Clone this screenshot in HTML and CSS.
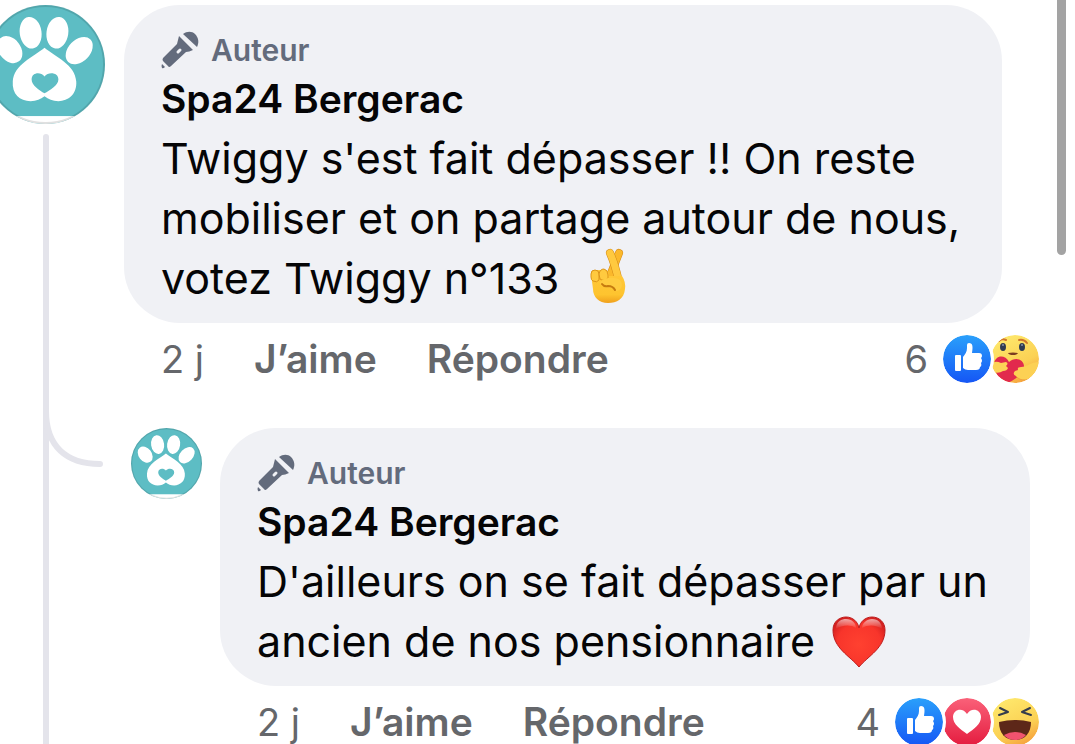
FILE: index.html
```html
<!doctype html>
<html lang="fr">
<head>
    <meta charset="UTF-8">
    <meta name="viewport" content="width=device-width, initial-scale=1.0">
    <title>Commentaires - Spa24 Bergerac</title>
    <link rel="stylesheet" href="styles.css">
</head>
<body>
    <!-- Shared icons -->
    <svg class="sprite" aria-hidden="true">
        <defs>
            <linearGradient id="blue" x1="0" y1="0" x2="0" y2="1">
                <stop offset="0" stop-color="#2aa0fb"/>
                <stop offset="1" stop-color="#1556f5"/>
            </linearGradient>
            <linearGradient id="red" x1="0" y1="0" x2="0" y2="1">
                <stop offset="0" stop-color="#fa6179"/>
                <stop offset="1" stop-color="#e41c3f"/>
            </linearGradient>
            <linearGradient id="yellow" x1="0.3" y1="0" x2="0.8" y2="1">
                <stop offset="0" stop-color="#fee86c"/>
                <stop offset="0.6" stop-color="#fbd154"/>
                <stop offset="1" stop-color="#f59a3a"/>
            </linearGradient>
            <linearGradient id="skin" x1="0" y1="0" x2="0" y2="1">
                <stop offset="0" stop-color="#ffc83a"/>
                <stop offset="0.75" stop-color="#fec42f"/>
                <stop offset="1" stop-color="#f0a01c"/>
            </linearGradient>
            <radialGradient id="heartFill" cx="0.5" cy="0.55" r="0.6">
                <stop offset="0" stop-color="#ff4130"/>
                <stop offset="0.7" stop-color="#f8352b"/>
                <stop offset="1" stop-color="#d3201f"/>
            </radialGradient>
            <linearGradient id="shine" x1="0" y1="0" x2="0" y2="1">
                <stop offset="0" stop-color="#fff" stop-opacity="0.6"/>
                <stop offset="1" stop-color="#fff" stop-opacity="0"/>
            </linearGradient>
            <clipPath id="round"><circle cx="60" cy="60" r="60"/></clipPath>
            <clipPath id="face"><circle cx="24" cy="24" r="24"/></clipPath>
        </defs>

        <symbol id="paw" viewBox="0 0 120 120">
            <g clip-path="url(#round)">
                <rect width="120" height="120" fill="#5dbdc4"/>
                <rect y="112" width="120" height="8" fill="#fff"/>
                <g fill="#fff">
                    <ellipse cx="24" cy="45" rx="11" ry="15" transform="rotate(-38 24 45)"/>
                    <ellipse cx="45" cy="28" rx="11" ry="16" transform="rotate(-8 45 28)"/>
                    <ellipse cx="72" cy="28" rx="11" ry="16" transform="rotate(8 72 28)"/>
                    <ellipse cx="94" cy="46" rx="11" ry="16" transform="rotate(44 94 46)"/>
                    <path d="M59 43C70 52 90 60 91 77C92 90 83 97 73 97C67 97 63 95 59 92C55 95 51 97 45 97C34 97 26 90 27 77C28 60 48 52 59 43Z"/>
                </g>
                <path d="M59 89C54 86 46 81 46 75C46 68 55 67 59 72C63 67 73 68 73 75C73 81 64 86 59 89Z" fill="#5dbdc4"/>
            </g>
            <circle cx="60" cy="60" r="59" fill="none" stroke="#000" stroke-opacity="0.12" stroke-width="2"/>
        </symbol>

        <symbol id="mic" viewBox="0 0 38 38">
            <g fill="#636b7c">
                <path d="M22 3C26 0 31 0 34 3C38 7 38 12 36 16Z"/>
                <path d="M18 5L32 19Q28 21 25 21L10 35Q8 37 7 35L2 30Q1 29 2 27L16 13Q17 9 18 5Z"/>
                <path d="M1 33L4 36Q2 38 1 37Q0 35 1 33Z"/>
            </g>
            <path d="M17 21L19 19" stroke="#f0f1f5" stroke-width="3" stroke-linecap="round"/>
        </symbol>

        <symbol id="like" viewBox="0 0 48 48">
            <circle cx="24" cy="24" r="24" fill="url(#blue)"/>
            <g fill="#fff">
                <rect x="12" y="20" width="6" height="16" rx="1"/>
                <path d="M20 22C22 19 24 17 24 13V10Q24 8 26 8C30 8 30 12 29 18H36Q39 18 39 21Q39 22 38 23Q40 26 38 28Q39 31 37 32Q37 35 33 35H25Q22 35 20 33Z"/>
            </g>
        </symbol>

        <symbol id="love" viewBox="0 0 48 48">
            <circle cx="24" cy="24" r="24" fill="url(#red)"/>
            <path d="M24 36C17 31 10 26 10 19C10 11 20 9 24 16C28 9 38 11 38 19C38 26 31 31 24 36Z" fill="#fff"/>
        </symbol>

        <symbol id="haha" viewBox="0 0 48 48">
            <circle cx="24" cy="24" r="24" fill="url(#yellow)"/>
            <g fill="none" stroke="#343c4d" stroke-width="2" stroke-linecap="round" stroke-linejoin="round">
                <path d="M9 10L17 14L8 17"/>
                <path d="M39 10L31 14L40 17"/>
            </g>
            <path d="M8 24Q24 20 40 24C40 35 34 42 24 42C14 42 8 35 8 24Z" fill="#5d2719"/>
            <path d="M13 37Q24 31 35 37Q31 42 24 42Q17 42 13 37Z" fill="#f1536f"/>
        </symbol>

        <symbol id="care" viewBox="0 0 48 48">
            <g clip-path="url(#face)">
                <rect width="48" height="48" fill="url(#yellow)"/>
                <g fill="none" stroke="#cf762d" stroke-width="2" stroke-linecap="round">
                    <path d="M8 6Q11 3 15 5"/>
                    <path d="M28 5Q33 4 36 8"/>
                </g>
                <ellipse cx="12" cy="12" rx="3" ry="4" fill="#2f3b51"/>
                <ellipse cx="31" cy="12" rx="3" ry="4" fill="#2f3b51"/>
                <circle cx="12" cy="10" r="1" fill="#8792a8"/>
                <circle cx="31" cy="10" r="1" fill="#8792a8"/>
                <path d="M17 18Q22 17 27 18Q26 20 22 20Q18 20 17 18Z" fill="#7b3d20"/>
                <path d="M12 50C8 43 3 36 3 29C4 20 14 19 18 27C24 21 34 24 33 33C31 42 19 47 12 50Z" fill="#e22a4d"/>
                <path d="M0 29Q4 25 10 28L15 27Q18 28 15 31L17 33Q16 36 12 36Q8 39 2 37Z" fill="#fcd457"/>
                <path d="M48 27C40 27 36 32 30 32Q26 32 27 35L24 36Q21 39 25 41C29 47 39 46 48 37Z" fill="#fcd154"/>
                <path d="M25 41C29 47 39 46 45 40" fill="none" stroke="#f0a23e" stroke-width="1"/>
            </g>
        </symbol>

        <symbol id="fingers" viewBox="0 0 36 56">
            <g fill="none" stroke-linecap="round">
                <path d="M29 5L20 28" stroke="#d48a18" stroke-width="8"/>
                <path d="M29 5L20 28" stroke="#fbb82b" stroke-width="7"/>
                <path d="M20 5Q25 16 29 34" stroke="#d48a18" stroke-width="8"/>
                <path d="M20 5Q25 16 29 34" stroke="#ffc93f" stroke-width="7"/>
            </g>
            <path d="M1 26Q1 22 5 22H12Q16 21 18 23L19 28L32 28Q36 34 35 41C34 51 27 55 18 55C9 55 3 49 3 41Z" fill="url(#skin)"/>
            <path d="M1 26Q1 22 5 22Q9 22 9 26V32Q7 35 3 33Q1 32 1 29Z" fill="#ffca3f" stroke="#dc951b" stroke-width="1"/>
            <path d="M9 26Q10 21 14 21Q18 22 18 27V30Q14 34 10 31Z" fill="#ffca3f" stroke="#dc951b" stroke-width="1"/>
            <path d="M11 33C16 29 25 29 30 32C34 37 31 43 26 43C22 38 16 41 11 37Q9 35 11 33Z" fill="#ffcc40"/>
            <path d="M12 36Q14 39 18 38Q23 38 25 42" fill="none" stroke="#c67b10" stroke-width="2" stroke-linecap="round"/>
        </symbol>

        <symbol id="heart" viewBox="0 0 54 52">
            <path d="M27 51C18 40 1 32 1 14C1 5 8 1 14 1C21 1 26 6 27 12C28 6 33 1 40 1C47 1 53 6 53 14C53 32 36 40 27 51Z" fill="url(#heartFill)" stroke="#bd1b1b" stroke-width="1"/>
            <path d="M4 13C4 5 10 3 14 3C20 3 24 7 24 12C19 8 9 9 4 13Z" fill="url(#shine)"/>
            <path d="M30 12C30 7 35 3 40 3C46 3 50 7 50 13C45 9 36 8 30 12Z" fill="url(#shine)"/>
        </symbol>
    </svg>

    <main class="thread">
        <div class="rail">
            <svg class="avatar" role="img" aria-label="Spa24 Bergerac"><use href="#paw"/></svg>
            <div class="rail-line"></div>
        </div>

        <div class="content">
            <article class="comment">
                <div class="bubble">
                    <div class="badge"><svg class="mic"><use href="#mic"/></svg>Auteur</div>
                    <a class="name" href="#">Spa24 Bergerac</a>
                    <p class="text">Twiggy s'est fait dépasser !! On reste<br>mobiliser et on partage autour de nous,<br>votez Twiggy n°133 <svg class="emoji-fingers" role="img" aria-label="Doigts croisés"><use href="#fingers"/></svg></p>
                </div>
                <div class="actions">
                    <span class="age">2 j</span>
                    <button type="button">J’aime</button>
                    <button type="button">Répondre</button>
                    <div class="reactions">
                        <span class="count">6</span>
                        <svg class="reaction"><use href="#like"/></svg>
                        <svg class="reaction"><use href="#care"/></svg>
                    </div>
                </div>
            </article>

            <div class="reply">
                <svg class="branch" viewBox="0 0 60 60"><path d="M3 3C3 38 23 56 57 56"/></svg>
                <svg class="avatar avatar-small" role="img" aria-label="Spa24 Bergerac"><use href="#paw"/></svg>
                <article class="comment">
                    <div class="bubble">
                        <div class="badge"><svg class="mic"><use href="#mic"/></svg>Auteur</div>
                        <a class="name" href="#">Spa24 Bergerac</a>
                        <p class="text">D'ailleurs on se fait dépasser par un<br>ancien de nos pensionnaire <svg class="emoji-heart" role="img" aria-label="Cœur"><use href="#heart"/></svg></p>
                    </div>
                    <div class="actions">
                        <span class="age">2 j</span>
                        <button type="button">J’aime</button>
                        <button type="button">Répondre</button>
                        <div class="reactions">
                            <span class="count">4</span>
                            <svg class="reaction"><use href="#like"/></svg>
                            <svg class="reaction"><use href="#love"/></svg>
                            <svg class="reaction"><use href="#haha"/></svg>
                        </div>
                    </div>
                </article>
            </div>
        </div>
    </main>

    <div class="scroll-thumb"></div>
</body>
</html>
```

FILE: styles.css
```css
* {
    box-sizing: border-box;
}

body {
    margin: 0;
    height: 100vh;
    overflow: hidden;
    background: #fff;
    color: #050506;
    font-family: Inter, "Liberation Sans", sans-serif;
}

.sprite {
    position: absolute;
    width: 0;
    height: 0;
}

.thread {
    display: flex;
    gap: 19px;
    min-height: 100vh;
    padding: 5px 36px 0 0;
}

.rail {
    display: flex;
    flex-direction: column;
    align-items: center;
    gap: 10px;
    flex: none;
    margin-left: -14px;
}

.avatar {
    display: block;
    flex: none;
    width: 119px;
    height: 119px;
}

.avatar-small {
    width: 71px;
    height: 71px;
}

.rail-line {
    flex: 1;
    width: 6px;
    border-radius: 3px 3px 0 0;
    background: #e4e4eb;
}

.content {
    flex: 1;
    min-width: 0;
}

.comment {
    flex: 1;
    min-width: 0;
}

.bubble {
    width: fit-content;
    padding: 25px 42px 15px 37px;
    border-radius: 56px;
    background: #f0f1f5;
}

.badge {
    display: flex;
    align-items: center;
    gap: 12px;
    color: #636b7c;
    font-size: 30px;
    font-weight: 600;
    line-height: 40px;
}

.mic {
    width: 38px;
    height: 38px;
}

.name {
    display: block;
    color: inherit;
    font-size: 39px;
    font-weight: 600;
    line-height: 58px;
    text-decoration: none;
}

.text {
    margin: 0;
    font-size: 43px;
    line-height: 60px;
    white-space: nowrap;
}

.emoji-fingers {
    width: 36px;
    height: 56px;
    margin: -6px 0 0 19px;
    vertical-align: -10px;
}

.emoji-heart {
    width: 54px;
    height: 52px;
    margin-left: 5px;
    vertical-align: -11px;
}

.actions {
    display: flex;
    align-items: center;
    gap: 50px;
    height: 71px;
    padding-left: 37px;
    color: #65676b;
    font-size: 38px;
}

.actions button {
    padding: 0;
    border: none;
    background: none;
    color: inherit;
    font: inherit;
    font-size: 39px;
    font-weight: 600;
    cursor: pointer;
}

.reactions {
    display: flex;
    align-items: center;
    margin-left: auto;
}

.count {
    margin-right: 15px;
}

/* white ring cuts into the next icon */
.reaction {
    position: relative;
    width: 48px;
    height: 48px;
    border-radius: 50%;
    box-shadow: 0 0 0 3px #fff;
}

.reaction:nth-child(2) {
    z-index: 3;
}

.reaction:nth-child(3) {
    z-index: 2;
}

.reply {
    display: flex;
    gap: 18px;
    position: relative;
    margin-top: 34px;
    padding-left: 7px;
}

.branch {
    position: absolute;
    top: -20px;
    left: -81px;
    width: 60px;
    height: 60px;
    fill: none;
    stroke: #e4e4eb;
    stroke-width: 6;
    stroke-linecap: round;
}

.scroll-thumb {
    position: absolute;
    top: -10px;
    right: 9px;
    width: 9px;
    height: 265px;
    border-radius: 5px;
    background: #a3a3a3;
}
```
